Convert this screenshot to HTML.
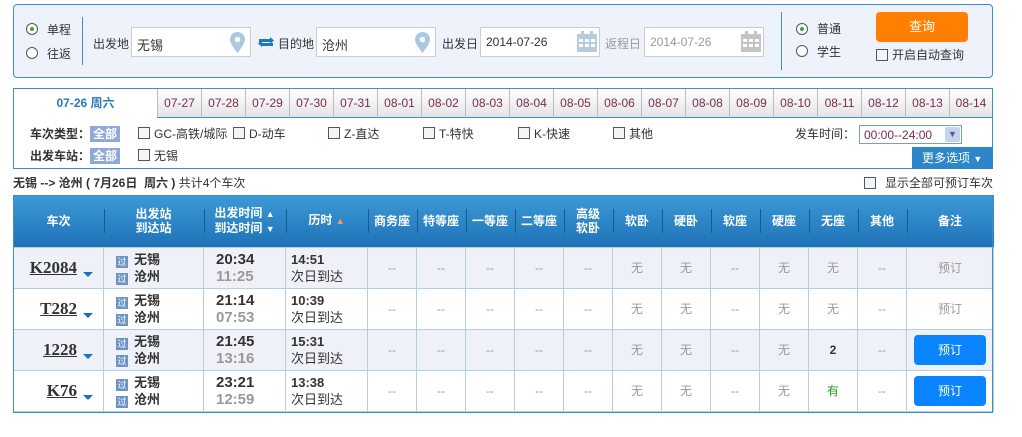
<!DOCTYPE html>
<html><head><meta charset="utf-8">
<style>
*{box-sizing:border-box;margin:0;padding:0}
body{width:1022px;height:437px;background:#fff;font-family:"Liberation Sans","Noto Sans CJK SC",sans-serif;font-size:12px;color:#333;position:relative;overflow:hidden}
.a{position:absolute}
.panel{left:13px;top:4px;width:980px;height:74px;border:1px solid #3d8fc4;border-radius:4px;background:#eef3fb}
.radio{width:12px;height:12px;border:1px solid #555;border-radius:50%;background:#fff}
.radio.on::after{content:"";position:absolute;left:3px;top:3px;width:4px;height:4px;border-radius:50%;background:#3a3}
.inp{height:30px;border:1px solid #ccc;background:#fff;font-size:13px;padding:7px 0 0 5px;color:#333}
.lbl{font-size:12px;color:#333}
.cb{width:12px;height:12px;border:1px solid #4a5a6a;background:#f4f4f4}
.tabs{left:13px;top:88px;width:980px;height:81px;border:1px solid #3d8fc4}
.tab{top:89px;height:29px;border-left:1px solid #bbb;border-bottom:1px solid #3d8fc4;background:linear-gradient(#fff,#e4e4e4);color:#7a2a50;font-size:12px;text-align:center;line-height:29px}
.tag{background:#8fa9d6;color:#fff;padding:1px 3px;font-size:12px}
table{position:absolute;left:13px;top:195px;width:980px;border-collapse:collapse;table-layout:fixed}
th{height:52px;background:linear-gradient(#3c9ad8,#1f72b6);color:#fff;font-size:12px;font-weight:bold;line-height:14px;position:relative}
th+th::before{content:"";position:absolute;left:0;top:14px;height:24px;border-left:1px solid #1a5a92}
td{height:41px;border:1px solid #b4cfe2;text-align:center;color:#999;font-size:12px}
tr.o td{background:#eef1f8}
.tn{font-size:17px;font-weight:bold;text-decoration:underline;color:#333;font-family:"Liberation Serif","Noto Serif CJK SC",serif}
.tri{display:inline-block;width:0;height:0;border-left:5px solid transparent;border-right:5px solid transparent;border-top:5px solid #1a6fc0;margin-left:6px;vertical-align:-4px}
.st{text-align:left;padding-left:12px;font-weight:bold;color:#333;font-size:13px;line-height:17px}
.g{display:inline-block;width:12px;height:12px;background:#6c94c4;color:#fff;font-size:9px;line-height:12px;text-align:center;margin-right:6px;vertical-align:-1px;font-weight:normal}
.tm{text-align:left;padding-left:12px;font-weight:bold;font-size:15px;line-height:17px;color:#333;font-family:"Liberation Sans",sans-serif}
.tm i{font-style:normal;color:#999}
.du{text-align:left;padding-left:5px;font-size:13px;line-height:17px;color:#333}
.du b{font-weight:bold}
.btn{display:inline-block;width:72px;height:30px;background:#0a84ff;border-radius:4px;color:#fff;line-height:30px;font-size:12px}
</style></head><body>
<div class="a panel"></div>
<div class="a radio on" style="left:26px;top:23px"></div><div class="a lbl" style="left:47px;top:21px">单程</div>
<div class="a radio" style="left:26px;top:47px"></div><div class="a lbl" style="left:47px;top:45px">往返</div>
<div class="a" style="left:82px;top:17px;height:48px;border-left:1px solid #3d8fc4"></div>
<div class="a lbl" style="left:93px;top:35px">出发地</div>
<div class="a inp" style="left:131px;top:27px;width:120px">无锡</div>
<svg class="a" style="left:230px;top:32px" width="15" height="21" viewBox="0 0 15 21"><path d="M7.5 0C3.4 0 0 3.3 0 7.4 0 12 7.5 21 7.5 21S15 12 15 7.4C15 3.3 11.6 0 7.5 0z" fill="#a9c9e3"/><circle cx="7.5" cy="7.5" r="2.8" fill="#fff"/></svg>
<svg class="a" style="left:258px;top:35px" width="16" height="14" viewBox="0 0 16 14"><path d="M1 5h11V2l4 3.5-4 3.5V6H2z M15 9H4v3L0 8.5 4 5v3h10z" fill="#1a7ac0"/><rect x="1" y="4" width="11" height="3" fill="#1a7ac0"/><rect x="4" y="8" width="11" height="3" fill="#1a7ac0"/></svg>
<div class="a lbl" style="left:278px;top:35px">目的地</div>
<div class="a inp" style="left:316px;top:27px;width:120px">沧州</div>
<svg class="a" style="left:415px;top:32px" width="15" height="21" viewBox="0 0 15 21"><path d="M7.5 0C3.4 0 0 3.3 0 7.4 0 12 7.5 21 7.5 21S15 12 15 7.4C15 3.3 11.6 0 7.5 0z" fill="#a9c9e3"/><circle cx="7.5" cy="7.5" r="2.8" fill="#fff"/></svg>
<div class="a lbl" style="left:442px;top:35px">出发日</div>
<div class="a inp" style="left:480px;top:27px;width:120px;font-size:12px">2014-07-26</div>
<svg class="a" style="left:577px;top:31px" width="20" height="21" viewBox="0 0 20 21"><rect x="0" y="3" width="20" height="18" fill="#b4cbe0"/><rect x="4" y="0" width="3" height="5" fill="#b4cbe0"/><rect x="13" y="0" width="3" height="5" fill="#b4cbe0"/><g fill="#fff"><rect x="2" y="8" width="4" height="3"/><rect x="8" y="8" width="4" height="3"/><rect x="14" y="8" width="4" height="3"/><rect x="2" y="13" width="4" height="3"/><rect x="8" y="13" width="4" height="3"/><rect x="14" y="13" width="4" height="3"/></g></svg>
<div class="a lbl" style="left:605px;top:35px;color:#999">返程日</div>
<div class="a inp" style="left:644px;top:27px;width:120px;font-size:12px;color:#999">2014-07-26</div>
<svg class="a" style="left:741px;top:31px" width="20" height="21" viewBox="0 0 20 21"><rect x="0" y="3" width="20" height="18" fill="#c4c4c4"/><rect x="4" y="0" width="3" height="5" fill="#c4c4c4"/><rect x="13" y="0" width="3" height="5" fill="#c4c4c4"/><g fill="#fff"><rect x="2" y="8" width="4" height="3"/><rect x="8" y="8" width="4" height="3"/><rect x="14" y="8" width="4" height="3"/><rect x="2" y="13" width="4" height="3"/><rect x="8" y="13" width="4" height="3"/><rect x="14" y="13" width="4" height="3"/></g></svg>
<div class="a" style="left:781px;top:12px;height:58px;border-left:1px solid #3d8fc4"></div>
<div class="a radio on" style="left:796px;top:23px"></div><div class="a lbl" style="left:817px;top:20px">普通</div>
<div class="a radio" style="left:796px;top:45px"></div><div class="a lbl" style="left:817px;top:43px">学生</div>
<div class="a" style="left:876px;top:12px;width:92px;height:30px;background:#ff7f00;border-radius:4px;color:#fff;text-align:center;line-height:30px;font-size:13px">查询</div>
<div class="a cb" style="left:876px;top:49px"></div><div class="a lbl" style="left:892px;top:46px">开启自动查询</div>

<div class="a tabs"></div>
<div class="a" style="left:14px;top:89px;width:143px;height:29px;text-align:center;line-height:29px;color:#2a7ab8;font-weight:bold;font-size:12px">07-26 周六</div>
<div class="a" style="left:30px;top:125px;font-weight:bold">车次类型：<span class="tag">全部</span></div>
<div class="a cb" style="left:138px;top:127px"></div><div class="a" style="left:154px;top:125px">GC-高铁/城际</div>
<div class="a cb" style="left:233px;top:127px"></div><div class="a" style="left:249px;top:125px">D-动车</div>
<div class="a cb" style="left:328px;top:127px"></div><div class="a" style="left:344px;top:125px">Z-直达</div>
<div class="a cb" style="left:423px;top:127px"></div><div class="a" style="left:439px;top:125px">T-特快</div>
<div class="a cb" style="left:518px;top:127px"></div><div class="a" style="left:534px;top:125px">K-快速</div>
<div class="a cb" style="left:613px;top:127px"></div><div class="a" style="left:629px;top:125px">其他</div>
<div class="a" style="left:795px;top:125px">发车时间：</div>
<div class="a" style="left:859px;top:125px;width:103px;height:19px;border:1px solid #7f9db9;background:#fff;color:#7a2a50;padding:2px 0 0 4px">00:00--24:00</div>
<div class="a" style="left:945px;top:127px;width:15px;height:15px;background:#c4d4ee;border-radius:2px;color:#4d6185;font-size:9px;text-align:center;line-height:15px">&#9660;</div>
<div class="a" style="left:30px;top:147px;font-weight:bold">出发车站：<span class="tag">全部</span></div>
<div class="a cb" style="left:138px;top:149px"></div><div class="a" style="left:154px;top:147px">无锡</div>
<div class="a" style="left:912px;top:147px;width:81px;height:22px;background:#2e86c8;color:#fff;line-height:22px;padding-left:10px">更多选项 <span style="font-size:9px">&#9660;</span></div>

<div class="a" style="left:13px;top:174px;font-size:12px"><b>无锡 --&gt; 沧州 ( 7月26日&nbsp; 周六 )</b> 共计4个车次</div>
<div class="a cb" style="left:864px;top:177px"></div><div class="a" style="left:885px;top:174px">显示全部可预订车次</div>

<table>
<colgroup><col style="width:90px"><col style="width:100px"><col style="width:82px"><col style="width:82px"><col span="11" style="width:49px"><col style="width:87px"></colgroup>
<tr><th>车次</th><th>出发站<br>到达站</th><th>出发时间 <span style="font-size:9px">&#9650;</span><br>到达时间 <span style="font-size:9px">&#9660;</span></th><th>历时 <span style="color:#f0a050;font-size:9px">&#9650;</span></th><th>商务座</th><th>特等座</th><th>一等座</th><th>二等座</th><th>高级<br>软卧</th><th>软卧</th><th>硬卧</th><th>软座</th><th>硬座</th><th>无座</th><th>其他</th><th>备注</th></tr>
<tr class="o"><td style="text-align:right;padding-right:10px"><span class="tn">K2084</span><span class="tri"></span></td><td class="st"><span class="g">过</span>无锡<br><span class="g">过</span>沧州</td><td class="tm">20:34<br><i>11:25</i></td><td class="du"><b>14:51</b><br>次日到达</td><td>--</td><td>--</td><td>--</td><td>--</td><td>--</td><td>无</td><td>无</td><td>--</td><td>无</td><td>无</td><td>--</td><td>预订</td></tr>
<tr><td style="text-align:right;padding-right:10px"><span class="tn">T282</span><span class="tri"></span></td><td class="st"><span class="g">过</span>无锡<br><span class="g">过</span>沧州</td><td class="tm">21:14<br><i>07:53</i></td><td class="du"><b>10:39</b><br>次日到达</td><td>--</td><td>--</td><td>--</td><td>--</td><td>--</td><td>无</td><td>无</td><td>--</td><td>无</td><td>无</td><td>--</td><td>预订</td></tr>
<tr class="o"><td style="text-align:right;padding-right:10px"><span class="tn">1228</span><span class="tri"></span></td><td class="st"><span class="g">过</span>无锡<br><span class="g">过</span>沧州</td><td class="tm">21:45<br><i>13:16</i></td><td class="du"><b>15:31</b><br>次日到达</td><td>--</td><td>--</td><td>--</td><td>--</td><td>--</td><td>无</td><td>无</td><td>--</td><td>无</td><td style="color:#333;font-weight:bold">2</td><td>--</td><td><span class="btn">预订</span></td></tr>
<tr><td style="text-align:right;padding-right:10px"><span class="tn">K76</span><span class="tri"></span></td><td class="st"><span class="g">过</span>无锡<br><span class="g">过</span>沧州</td><td class="tm">23:21<br><i>12:59</i></td><td class="du"><b>13:38</b><br>次日到达</td><td>--</td><td>--</td><td>--</td><td>--</td><td>--</td><td>无</td><td>无</td><td>--</td><td>无</td><td style="color:#2a9a2a">有</td><td>--</td><td><span class="btn">预订</span></td></tr>
</table>
<div class="a" style="left:13px;top:195px;width:980px;height:218px;border:1px solid #3d8fc4;pointer-events:none"></div>

<div class="a tab" style="left:157px;width:44px">07-27</div>
<div class="a tab" style="left:201px;width:44px">07-28</div>
<div class="a tab" style="left:245px;width:44px">07-29</div>
<div class="a tab" style="left:289px;width:44px">07-30</div>
<div class="a tab" style="left:333px;width:44px">07-31</div>
<div class="a tab" style="left:377px;width:44px">08-01</div>
<div class="a tab" style="left:421px;width:44px">08-02</div>
<div class="a tab" style="left:465px;width:44px">08-03</div>
<div class="a tab" style="left:509px;width:44px">08-04</div>
<div class="a tab" style="left:553px;width:44px">08-05</div>
<div class="a tab" style="left:597px;width:44px">08-06</div>
<div class="a tab" style="left:641px;width:44px">08-07</div>
<div class="a tab" style="left:685px;width:44px">08-08</div>
<div class="a tab" style="left:729px;width:44px">08-09</div>
<div class="a tab" style="left:773px;width:44px">08-10</div>
<div class="a tab" style="left:817px;width:44px">08-11</div>
<div class="a tab" style="left:861px;width:44px">08-12</div>
<div class="a tab" style="left:905px;width:44px">08-13</div>
<div class="a tab" style="left:949px;width:43px">08-14</div>
</body></html>
